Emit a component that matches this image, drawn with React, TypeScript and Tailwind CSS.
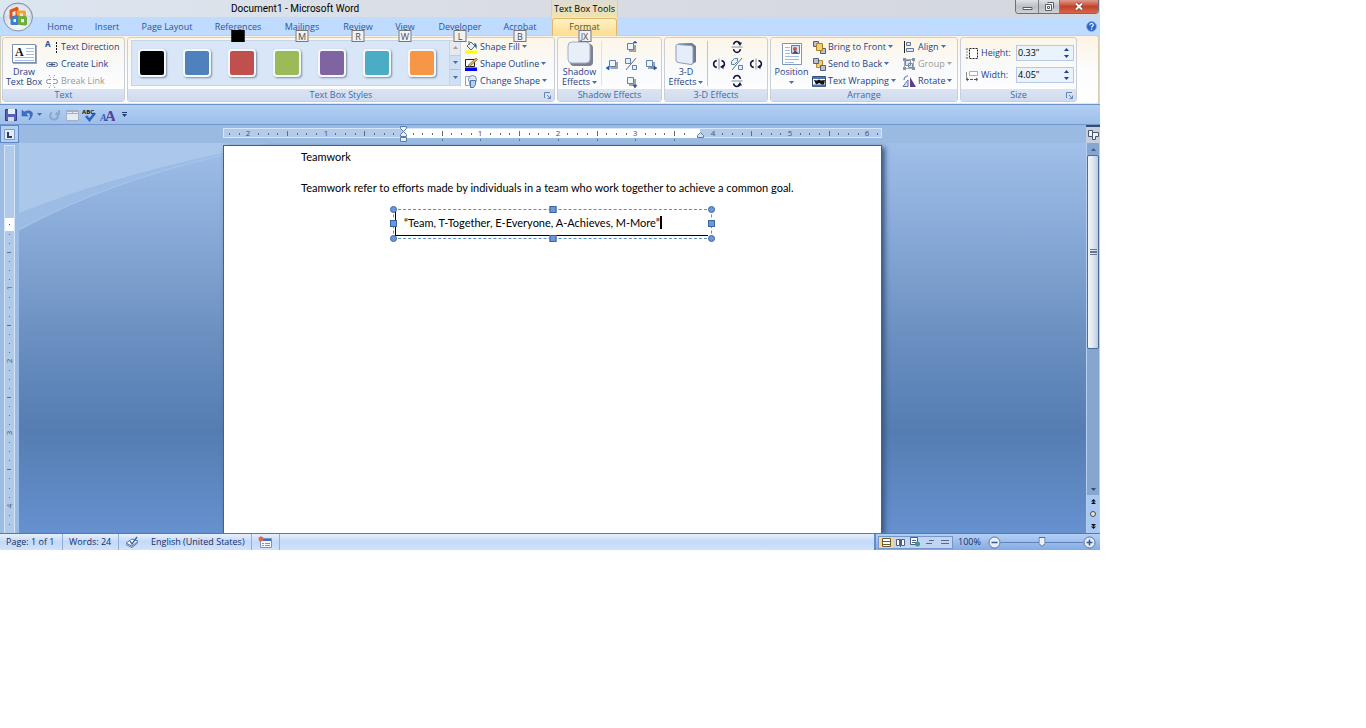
import type { ReactNode } from "react";
import clsx from "clsx";

const tabs = [
  { label: "Home", width: "w-[48px]" },
  { label: "Insert", width: "w-[46px]" },
  { label: "Page Layout", width: "w-[74px]" },
  { label: "References", width: "w-[68px]", selectedTip: true },
  { label: "Mailings", width: "w-[60px]", tip: "M" },
  { label: "Review", width: "w-[52px]", tip: "R" },
  { label: "View", width: "w-[42px]", tip: "W" },
  { label: "Developer", width: "w-[68px]", tip: "L" },
  { label: "Acrobat", width: "w-[52px]", tip: "B" },
];

const swatches = [
  { name: "Black", color: "bg-black" },
  { name: "Blue", color: "bg-[#4f81bd]" },
  { name: "Red", color: "bg-[#c0504d]" },
  { name: "Green", color: "bg-[#9bbb59]" },
  { name: "Purple", color: "bg-[#8064a2]" },
  { name: "Aqua", color: "bg-[#4bacc6]" },
  { name: "Orange", color: "bg-[#f79646]" },
];

function Arrow({ up = false, className = "text-[#4a6fa5]" }: { up?: boolean; className?: string }) {
  return (
    <svg width="5" height="3" viewBox="0 0 5 3" className={clsx("shrink-0", className)} aria-hidden="true">
      <path d={up ? "M0 3h5L2.5 0z" : "M0 0h5L2.5 3z"} fill="currentColor" />
    </svg>
  );
}

function Icon({ w = 14, h = 14, children }: { w?: number; h?: number; children: ReactNode }) {
  return (
    <svg width={w} height={h} viewBox={`0 0 ${w} ${h}`} fill="none" className="shrink-0" aria-hidden="true">
      {children}
    </svg>
  );
}

function KeyTip({ label, selected = false }: { label?: string; selected?: boolean }) {
  return (
    <span
      className={clsx(
        "absolute top-[13px] left-1/2 z-20 flex h-[12px] min-w-[13px] -translate-x-1/2 items-center justify-center border text-[9px] leading-none",
        selected ? "border-black bg-black" : "border-[#767676] bg-[#f1f2f6] text-[#4c4c4c]"
      )}
    >
      {label}
    </span>
  );
}

interface RibbonGroupProps {
  title: string;
  className: string;
  launcher?: boolean;
  children: ReactNode;
}

function RibbonGroup({ title, className, launcher, children }: RibbonGroupProps) {
  return (
    <section
      className={clsx(
        "flex h-[65px] shrink-0 flex-col overflow-hidden rounded-[3px] border border-[#c9cfd8] bg-gradient-to-b from-[#fdf6e8] via-[#f9fafc] to-white",
        className
      )}
    >
      <div className="flex h-[51px] items-stretch">{children}</div>
      <h2 className="relative flex h-[12px] items-center justify-center bg-gradient-to-b from-[#dbe4f3] to-[#cfdbee] text-[#3e6aaa]">
        {title}
        {launcher && (
          <button aria-label={`${title} options`} className="absolute right-[3px] bottom-[2px]">
            <Icon w={7} h={7}>
              <path d="M.5 6V.5H6M3 3l3 3M6.500 3.500v3h-3" stroke="#6486b5" />
            </Icon>
          </button>
        )}
      </h2>
    </section>
  );
}

interface CommandProps {
  icon: ReactNode;
  label: string;
  arrow?: boolean;
  disabled?: boolean;
}

function Command({ icon, label, arrow, disabled }: CommandProps) {
  return (
    <button
      disabled={disabled}
      className={clsx(
        "flex h-[17px] items-center gap-[2px] whitespace-nowrap",
        disabled ? "text-[#9a9a9a]" : "text-[#1f3f86]"
      )}
    >
      {icon}
      {label}
      {arrow && <Arrow className={disabled ? "text-[#a8a8a8]" : "text-[#4a6fa5]"} />}
    </button>
  );
}

interface BigCommandProps {
  icon: ReactNode;
  lines: string[];
  arrow?: "inline" | "below";
  className: string;
}

function BigCommand({ icon, lines, arrow, className }: BigCommandProps) {
  return (
    <button className={clsx("flex shrink-0 flex-col items-center pt-[3px] text-[#1f3f86]", className)}>
      <span className="flex h-[26px] items-center">{icon}</span>
      {lines.map((line, i) => (
        <span key={line} className="flex h-[10px] items-center gap-[2px] whitespace-nowrap">
          {line}
          {arrow === "inline" && i === lines.length - 1 && <Arrow />}
        </span>
      ))}
      {arrow === "below" && (
        <span className="flex h-[10px] items-center">
          <Arrow />
        </span>
      )}
    </button>
  );
}

/* Small square used by the shadow nudge buttons */
function NudgeIcon({ d }: { d: string }) {
  return (
    <Icon>
      <path d="M5 5h7v7H5z" fill="#a3a3a3" />
      <path d="M3.500 3.500h6v6h-6z" fill="#eef5fd" stroke="#5a83b4" />
      <path d={d} fill="#1d55a8" stroke="#1d55a8" strokeWidth="0.5" />
    </Icon>
  );
}

/* Axis line with an arc on each side, the right arc carrying the arrow head */
function TiltIcon({ transform }: { transform?: string }) {
  return (
    <Icon>
      <g transform={transform}>
        <path d="M7 1.500v11" stroke="#7f9186" />
        <path d="M4.800 3.500C.5 4.500.5 9.500 4.800 10.500" stroke="#15154a" strokeWidth="1.500" />
        <path d="M9.500 3.500c3.800 1 3.800 5.500.5 6.500" stroke="#15154a" strokeWidth="1.500" />
        <path d="M11.500 7.500v4.500L8 10z" fill="#15154a" />
      </g>
    </Icon>
  );
}

function OfficeButton() {
  return (
    <button aria-label="Office Button" className="absolute top-[2px] left-[2px] z-20">
      <svg width="32" height="30" viewBox="0 0 32 30" aria-hidden="true">
        <defs>
          <radialGradient id="orb" cx="0.5" cy="0.75" r="0.8">
            <stop offset="0" stopColor="#ffffff" />
            <stop offset="0.5" stopColor="#dfe4ec" />
            <stop offset="1" stopColor="#a9b5c8" />
          </radialGradient>
        </defs>
        <ellipse cx="16" cy="15" rx="14.500" ry="14" fill="url(#orb)" stroke="#8292ab" />
        <path d="M3 14C4 5 10 2 16 2s12 3 13 12c-8-3-18-3-26 0z" fill="#fff" opacity="0.5" />
        <g fill="none" strokeWidth="3" strokeLinejoin="round">
          <path d="M9 9l6-2.500v8L9 16z" stroke="#e2561d" />
          <path d="M16 10h6.500v5.500H17z" stroke="#f4a32a" />
          <path d="M10 16l5.500-1v6.500H10z" stroke="#3c7fd0" />
          <path d="M17.500 15.500h6V22l-6-.5z" stroke="#6eae3a" />
        </g>
      </svg>
    </button>
  );
}

function TitleBar() {
  return (
    <header className="flex h-[17px] bg-gradient-to-r from-[#dce6f0] via-[#d9dce2] to-[#d3d8de] text-[10px] text-black">
      <div className="w-[231px] shrink-0" />
      <h1 className="w-[320px] shrink-0 font-[Roboto,sans-serif] leading-[17px]">Document1 - Microsoft Word</h1>
      <div className="flex w-[67px] shrink-0 items-center justify-center border-x border-[#d8cfa6] bg-gradient-to-b from-[#dedcd4] to-[#efe3ae] text-[9px] whitespace-nowrap">
        Text Box Tools
      </div>
      <div className="mr-px ml-auto flex h-[14px] overflow-hidden rounded-b-[4px] border border-t-0 border-[#6b7078]">
        <button aria-label="Minimize" className="flex w-[23px] items-center justify-center border-r border-[#7b8088] bg-gradient-to-b from-[#dfe2e6] via-[#bcc0c7] to-[#cfd2d7]">
          <Icon w={11} h={9}>
            <path d="M1 5.500h9v2H1z" fill="#fff" stroke="#5a5d63" />
          </Icon>
        </button>
        <button aria-label="Restore" className="flex w-[21px] items-center justify-center border-r border-[#7b8088] bg-gradient-to-b from-[#dfe2e6] via-[#bcc0c7] to-[#cfd2d7]">
          <Icon w={9} h={9}>
            <path d="M2.500.5h6v6M.5 2.500h6v6h-6z" fill="#fff" stroke="#5a5d63" />
            <path d="M2.500 4.500h2v2h-2z" stroke="#5a5d63" />
          </Icon>
        </button>
        <button aria-label="Close" className="flex w-[38px] items-center justify-center bg-gradient-to-b from-[#dd9a8b] via-[#c4412a] to-[#d5664b]">
          <Icon w={10} h={9}>
            <path d="M2 1.500l6 6M8 1.500l-6 6" stroke="#6b3a35" strokeWidth="3.500" />
            <path d="M2 1.500l6 6M8 1.500l-6 6" stroke="#fff" strokeWidth="2" />
          </Icon>
        </button>
      </div>
    </header>
  );
}

function TabStrip() {
  return (
    <nav className="flex h-[18px] bg-[#bfdbff] pl-[36px] text-[#2a55a0]">
      {tabs.map((tab) => (
        <button key={tab.label} className={clsx("relative h-[20px] shrink-0", tab.width)}>
          {tab.label}
          {(tab.tip || tab.selectedTip) && <KeyTip label={tab.tip} selected={tab.selectedTip} />}
        </button>
      ))}
      <div className="relative ml-[5px] flex h-[19px] w-[67px] shrink-0 items-end border-x border-[#e0d9b0] bg-[#f5e8bd]">
        <button className="h-[18px] w-full rounded-t-[3px] border border-b-0 border-[#e0b766] bg-gradient-to-b from-[#fff0c4] to-[#fddc8e] pb-px text-[#54502f]">
          Format
        </button>
        <KeyTip label="JX" />
      </div>
      <button aria-label="Help" className="mr-[3px] ml-auto">
        <Icon w={11} h={11}>
          <circle cx="5.500" cy="5.500" r="5" fill="#2d66c8" stroke="#8fb2e6" />
          <path d="M3.800 4.200c0-2.200 3.500-2.200 3.500-.2 0 1.200-1.700 1.200-1.700 2.500M5.600 7.500v1.300" stroke="#fff" strokeWidth="1.200" />
        </Icon>
      </button>
    </nav>
  );
}

function TextGroup() {
  return (
    <RibbonGroup title="Text" className="w-[123px]">
      <BigCommand
        className="w-[42px]"
        lines={["Draw", "Text Box"]}
        icon={
          <Icon w={25} h={20}>
            <path d="M1 1h24v19H1z" fill="#9aa7b8" />
            <path d="M.5.5h23v18H.5z" fill="#fff" stroke="#7b8fae" />
            <path d="M14 4.500h8M14 7.500h8M14 10.500h8M3 13.500h19M3 16.500h19" stroke="#a9c0e2" />
            <text x="3" y="12" fontSize="12" fontWeight="bold" fontFamily="Liberation Serif, serif" fill="#111">
              A
            </text>
          </Icon>
        }
      />
      <div className="flex flex-col">
        <Command
          label="Text Direction"
          icon={
            <Icon>
              <text x="0" y="7" fontSize="8" fontWeight="bold" fill="#24479b">
                A
              </text>
              <path d="M11.500 2v11" stroke="#111" strokeDasharray="2 1" />
            </Icon>
          }
        />
        <Command
          label="Create Link"
          icon={
            <Icon>
              <rect x="1.500" y="5.500" width="6" height="4" rx="2" fill="#d7e2f0" stroke="#5b6f92" />
              <rect x="6.500" y="5.500" width="6" height="4" rx="2" fill="#d7e2f0" stroke="#5b6f92" />
              <path d="M4 7.500h6" stroke="#40557b" />
            </Icon>
          }
        />
        <Command
          label="Break Link"
          disabled
          icon={
            <Icon>
              <path d="M6 5.500H3.500a2 2 0 000 4H6M8 5.500h2.500a2 2 0 010 4H8" stroke="#8c9099" />
              <path d="M4 1l1.500 2.500M9.500 1L8.500 3.500M4 14l1.500-2.500M10 14l-1.500-2.500" stroke="#8c9099" strokeDasharray="1 1" />
            </Icon>
          }
        />
      </div>
    </RibbonGroup>
  );
}

function StylesGroup() {
  return (
    <RibbonGroup title="Text Box Styles" className="w-[428px]" launcher>
      <div className="mt-[2px] ml-[3px] flex h-[46px] shrink-0 border border-[#c5d6ec] bg-[#d8e6f7]">
        <div className="flex w-[317px] items-center gap-[17px] pl-[6px]">
          {swatches.map((swatch) => (
            <button
              key={swatch.name}
              aria-label={swatch.name}
              className={clsx("size-[28px] shrink-0 rounded-[4px] border-2 border-[#f4f8fd] shadow-[1px_1px_2px_#7d8ca3]", swatch.color)}
            />
          ))}
        </div>
        <div className="grid w-[11px] grid-rows-3 border-l border-[#c5d6ec]">
          <button aria-label="Previous row" className="flex items-center justify-center border-b border-[#b9cde8] bg-[#e9e9eb]">
            <Arrow up className="text-[#a0a0a0]" />
          </button>
          <button aria-label="Next row" className="flex items-center justify-center border-b border-[#a9c2e4] bg-[#cfe0f5]">
            <Arrow />
          </button>
          <button aria-label="More styles" className="flex items-center justify-center bg-[#cfe0f5]">
            <Arrow />
          </button>
        </div>
      </div>
      <div className="ml-[3px] flex flex-col">
        <Command
          label="Shape Fill"
          arrow
          icon={
            <Icon>
              <path d="M3 6l4-4 4 4-4 4z" fill="#e9eef5" stroke="#55657c" />
              <path d="M5 1v4" stroke="#55657c" />
              <path d="M10 3c3 0 3 3 2.500 6C11 7 10.500 5 10 3z" fill="#2e66b5" />
              <path d="M1 10.500h12v3H1z" fill="#ffff00" />
            </Icon>
          }
        />
        <Command
          label="Shape Outline"
          arrow
          icon={
            <Icon>
              <path d="M1.500 2.500h9v7h-9z" stroke="#222" />
              <path d="M4 8.500l8-7.500 1.500 1.500-8 7z" fill="#e6b355" stroke="#7a5520" strokeWidth="0.700" />
              <path d="M1 10.500h12v3.500H1z" fill="#0000f0" />
            </Icon>
          }
        />
        <Command
          label="Change Shape"
          arrow
          icon={
            <Icon>
              <path d="M1.500 2.500h4v9h-4z" fill="#fff" stroke="#8ea4c4" />
              <circle cx="8.500" cy="5.500" r="4" fill="#dfeaf7" stroke="#6d8db8" />
              <path d="M6.500 6.500h5v4l-2 3h-3z" fill="#b9d0ee" stroke="#4a74ad" />
            </Icon>
          }
        />
      </div>
    </RibbonGroup>
  );
}

function ShadowGroup() {
  return (
    <RibbonGroup title="Shadow Effects" className="w-[105px]">
      <BigCommand
        className="w-[43px]"
        lines={["Shadow", "Effects"]}
        arrow="inline"
        icon={
          <Icon w={26} h={26}>
            <rect x="3" y="3" width="23" height="22" rx="4" fill="#7c828e" />
            <rect x="1" y="1" width="22" height="21" rx="4" fill="#e8eff9" stroke="#9fb0ca" />
          </Icon>
        }
      />
      <div className="my-[3px] w-px bg-[#dde3ec]" />
      <div className="grid flex-1 grid-cols-3 grid-rows-3 place-items-center px-[2px]">
        <span />
        <button aria-label="Nudge shadow up"><NudgeIcon d="M9 3h4L11 1z" /></button>
        <span />
        <button aria-label="Nudge shadow left"><NudgeIcon d="M3 9v4L0 11zM3 11h2" /></button>
        <button aria-label="Shadow on/off">
          <Icon>
            <path d="M1.500 1.500h5v5h-5zM8.500 8.500h4v4h-4z" fill="#e7f0fa" stroke="#5a83b4" />
            <path d="M2 13L12 1" stroke="#5a6d8a" />
          </Icon>
        </button>
        <button aria-label="Nudge shadow right"><NudgeIcon d="M11 9v4l3-2zM8 11h3" /></button>
        <span />
        <button aria-label="Nudge shadow down"><NudgeIcon d="M9 11h4l-2 3z" /></button>
        <span />
      </div>
    </RibbonGroup>
  );
}

function ThreeDGroup() {
  return (
    <RibbonGroup title="3-D Effects" className="w-[104px]">
      <BigCommand
        className="w-[42px]"
        lines={["3-D", "Effects"]}
        arrow="inline"
        icon={
          <Icon w={22} h={24}>
            <path d="M3 1.500l14-.5 4 3v16l-4 2z" fill="#707b8c" />
            <path d="M2.500 2.500Q1 2 1 4v14q0 2 2 2.500l13 2q2 0 2-2V6q0-2-2-2.500z" fill="#e5edf8" stroke="#8c9db8" />
          </Icon>
        }
      />
      <div className="my-[3px] w-px bg-[#b5c7de]" />
      <div className="grid flex-1 grid-cols-3 grid-rows-3 place-items-center px-[2px]">
        <span />
        <button aria-label="Tilt down"><TiltIcon transform="matrix(0 -1 1 0 0 14)" /></button>
        <span />
        <button aria-label="Tilt left"><TiltIcon /></button>
        <button aria-label="3-D on/off">
          <Icon>
            <path d="M1.500 4.500l3-3h3v3l-3 3h-3zM8.500 8.500h4v4h-4z" fill="#e7f0fa" stroke="#5a83b4" />
            <path d="M2 13L12 1" stroke="#5a6d8a" />
          </Icon>
        </button>
        <button aria-label="Tilt right"><TiltIcon /></button>
        <span />
        <button aria-label="Tilt up"><TiltIcon transform="matrix(0 1 1 0 0 0)" /></button>
        <span />
      </div>
    </RibbonGroup>
  );
}

function ArrangeGroup() {
  return (
    <RibbonGroup title="Arrange" className="w-[188px]">
      <BigCommand
        className="w-[41px]"
        lines={["Position"]}
        arrow="below"
        icon={
          <Icon w={20} h={22}>
            <path d="M.5.5h19v21H.5z" fill="#fff" stroke="#8196b6" />
            <path d="M3 4.500h5M3 7.500h5M3 10.500h5M3 13.500h14M3 16.500h14M3 19.500h9" stroke="#a4bbdd" />
            <path d="M9.500 2.500h8v8h-8z" fill="#cfe0f5" stroke="#5f7aa5" />
            <circle cx="13" cy="6" r="2" fill="#c7573c" />
            <path d="M10 10.500l3-3 4 3z" fill="#37507c" />
          </Icon>
        }
      />
      <div className="flex w-[90px] shrink-0 flex-col">
        <Command
          label="Bring to Front"
          arrow
          icon={
            <Icon>
              <path d="M1.500 1.500h5v5h-5zM8.500 8.500h5v5h-5z" fill="#b9c2cf" stroke="#56606f" />
              <path d="M4.500 3.500h6v7h-6z" fill="#f7cf6a" stroke="#a8802b" />
            </Icon>
          }
        />
        <Command
          label="Send to Back"
          arrow
          icon={
            <Icon>
              <path d="M4.500 3.500h6v7h-6z" fill="#f7cf6a" stroke="#b08a3a" />
              <path d="M1.500 1.500h5v5h-5zM8.500 8.500h5v5h-5z" fill="#b9c2cf" stroke="#56606f" />
            </Icon>
          }
        />
        <Command
          label="Text Wrapping"
          arrow
          icon={
            <Icon>
              <path d="M.5 2.500h13v10H.5z" fill="#fff" stroke="#36507e" />
              <path d="M1 4h12M1 11.500h12" stroke="#5176b0" strokeWidth="2" />
              <path d="M2 6l3 .5L7 5.500l2 1L13 6l-1 4.500H9.500L7.500 9 4 10.500z" fill="#111" />
            </Icon>
          }
        />
      </div>
      <div className="flex flex-col">
        <Command
          label="Align"
          arrow
          icon={
            <Icon>
              <path d="M2.500 1v12" stroke="#222" />
              <path d="M4.500 2.500h4v3h-4zM4.500 8.500h7v3h-7z" fill="#dbe7f6" stroke="#60789c" />
            </Icon>
          }
        />
        <Command
          label="Group"
          arrow
          disabled
          icon={
            <Icon>
              <path d="M2.500 2.500h9v9h-9z" stroke="#a0abb9" />
              <path d="M3.500 3.500h5v5h-5zM6.500 6.500h4v4h-4z" fill="#e3e9f1" stroke="#7789a3" />
              <path d="M1 1h3v3H1zM10 1h3v3h-3zM1 10h3v3H1zM10 10h3v3h-3z" fill="#8393aa" />
            </Icon>
          }
        />
        <Command
          label="Rotate"
          arrow
          icon={
            <Icon>
              <path d="M1 12.500L6 6v6.500z" fill="#dbe7f6" stroke="#60789c" />
              <path d="M8 3v10h6z" fill="#5b3f96" />
              <path d="M2 6c0-3 2-4 4-4" stroke="#3a6cae" />
            </Icon>
          }
        />
      </div>
    </RibbonGroup>
  );
}

interface SizeFieldProps {
  id: string;
  label: string;
  value: string;
  icon: ReactNode;
}

function SizeField({ id, label, value, icon }: SizeFieldProps) {
  return (
    <div className="flex h-[22px] items-center text-[#1f3f86]">
      {icon}
      <label htmlFor={id} className="w-[37px] shrink-0 pl-[2px]">
        {label}
      </label>
      <div className="flex h-[16px] w-[58px] border border-[#b4cae8] bg-[#eaf2fb]">
        <input id={id} defaultValue={value} className="w-[43px] bg-transparent pl-px text-black outline-none" />
        <div className="flex w-[13px] flex-col items-center justify-center gap-[4px]">
          <button aria-label={`Increase ${id}`}>
            <Arrow up className="text-[#23427c]" />
          </button>
          <button aria-label={`Decrease ${id}`}>
            <Arrow className="text-[#23427c]" />
          </button>
        </div>
      </div>
    </div>
  );
}

function SizeGroup() {
  return (
    <RibbonGroup title="Size" className="w-[117px]" launcher>
      <div className="flex flex-col pt-[4px] pl-[4px]">
        <SizeField
          id="height"
          label="Height:"
          value={'0.33"'}
          icon={
            <Icon>
              <path d="M4.500 2.500h8v10h-8z" fill="#fff" stroke="#222" strokeDasharray="2 1" />
              <path d="M2 2v11M1 4l1-2 1 2M1 11l1 2 1-2" stroke="#7d8ea8" strokeDasharray="2 1" />
            </Icon>
          }
        />
        <SizeField
          id="width"
          label="Width:"
          value={'4.05"'}
          icon={
            <Icon>
              <path d="M1.500 9.500v-6M12.500 3.500v4" stroke="#222" strokeDasharray="1 1" />
              <path d="M4.500 3.500h8v4h-8z" fill="#fff" stroke="#9db0cb" />
              <path d="M1 11.500h12M3 10l-2 1.500L3 13M11 10l2 1.500-2 1.500" stroke="#555" strokeDasharray="3 1" />
            </Icon>
          }
        />
      </div>
    </RibbonGroup>
  );
}

function Ribbon() {
  return (
    <div className="mr-px flex h-[69px] items-center gap-[2px] rounded-[3px] border border-[#d6cdb8] border-b-[#dfe8f5] bg-gradient-to-b from-[#fcf3e2] via-[#fcfcfd] to-white pl-px">
      <TextGroup />
      <StylesGroup />
      <ShadowGroup />
      <ThreeDGroup />
      <ArrangeGroup />
      <SizeGroup />
    </div>
  );
}

function QuickAccess() {
  return (
    <div className="flex h-[21px] items-center border-t border-b border-t-[#6d93c8] border-b-[#7199cf] bg-gradient-to-b from-[#b3cff3] to-[#9dbfea] pl-[4px]">
      <button aria-label="Save">
        <Icon>
          <path d="M1.500 1.500h11v11h-11z" fill="#5561b5" stroke="#343c8c" />
          <path d="M4 1h7v5H4z" fill="#e9eefb" />
          <path d="M4 9h6v4H4z" fill="#d5d9ea" />
        </Icon>
      </button>
      <button aria-label="Undo" className="ml-[3px]">
        <Icon>
          <path d="M1 2v6h6L4.800 5.800C8 3.500 11 5.500 8 12c6-5 4-12-5-8z" fill="#3f6fc9" stroke="#2c55a5" strokeWidth="0.500" />
        </Icon>
      </button>
      <button aria-label="Undo history" className="ml-[2px]">
        <Arrow />
      </button>
      <button aria-label="Repeat" disabled className="ml-[5px]">
        <Icon>
          <path d="M9 4.500c3 2 2.500 7-2 7s-5-5-2-7M12 2v4H8.500" stroke="#8fa6c8" strokeWidth="2" />
        </Icon>
      </button>
      <button aria-label="Table" className="ml-[4px]">
        <Icon>
          <path d="M1.500 2.500h12v10h-12z" fill="#e4ebf4" stroke="#a2b0c4" />
          <path d="M1 5.500h12M7.500 3v3M1 3.500h12" stroke="#a2b0c4" />
        </Icon>
      </button>
      <button aria-label="Spelling" className="ml-[3px]">
        <Icon>
          <path d="M4 8l3.500 4L13 5" stroke="#2e60c0" strokeWidth="2.500" />
          <text x="0" y="6" fontSize="6" fontWeight="bold" fill="#111">
            ABC
          </text>
        </Icon>
      </button>
      <button aria-label="Styles" className="ml-[4px]">
        <Icon w={15}>
          <text x="0" y="13" fontSize="10" fontWeight="bold" fontStyle="italic" fontFamily="Liberation Serif, serif" fill="#3360b5">
            A
          </text>
          <text x="5" y="13" fontSize="15" fontWeight="bold" fontFamily="Liberation Serif, serif" fill="#5a3f9c">
            A
          </text>
        </Icon>
      </button>
      <button aria-label="Customize Quick Access Toolbar" className="ml-[7px] flex flex-col items-center gap-px">
        <span className="h-px w-[5px] bg-[#1e3f78]" />
        <Arrow className="text-[#1e3f78]" />
      </button>
    </div>
  );
}

const INCH = 77.4;
const ZERO = 180;

function HorizontalRuler() {
  const eighths = Array.from({ length: 70 }, (_, i) => i - 18).filter((n) => ZERO + (n * INCH) / 8 < 657);
  return (
    <svg width="659" height="18" viewBox="0 0 659 18" className="block shrink-0" aria-hidden="true">
      <rect x="0.500" y="3.500" width="658" height="9" fill="#b3cbeb" stroke="#d8e6f8" />
      <rect x={ZERO} y="4" width="297" height="9" fill="#fff" />
      {eighths.map((n) => {
        const x = Math.round(ZERO + (n * INCH) / 8);
        if (n === 0 || n === 31 || n === 30) return null;
        if (n % 8 === 0) {
          return (
            <text key={n} x={x} y="11" fontSize="8" textAnchor="middle" fill="#45536b">
              {Math.abs(n / 8)}
            </text>
          );
        }
        const half = n % 4 === 0;
        return <rect key={n} x={x} y={half ? 6 : 8} width="1" height={half ? 5 : 2} fill="#5d6d88" />;
      })}
      {[1, 2, 3, 4, 5, 6, 7].map((n) => (
        <rect key={n} x={Math.round(ZERO + (n * INCH) / 2)} y="14" width="1" height="2" fill="#5d7296" />
      ))}
      <path d="M177.500 1.500h6v2l-3 3 3 3v2h-6v-2l3-3-3-3z" fill="#e9f0f9" stroke="#5b7ca9" />
      <path d="M177.500 12.500h6v4h-6z" fill="#e9f0f9" stroke="#5b7ca9" />
      <path d="M474.500 12.500v-2l3-3 3 3v2z" fill="#d5e3f5" stroke="#5b7ca9" />
    </svg>
  );
}

function VerticalRuler() {
  const ticks = Array.from({ length: 36 }, (_, i) => i + 1);
  return (
    <div className="w-[19px] shrink-0 bg-[#9dbce4] pl-[4px]">
      <svg width="11" height="390" viewBox="0 0 11 390" aria-hidden="true">
        <rect x="0.500" y="2.500" width="10" height="388" fill="#b1caea" stroke="#d5e4f7" />
        <rect x="1" y="75" width="9" height="13" fill="#fff" />
        <rect x="5" y="81" width="1" height="1" fill="#40506c" />
        {ticks.map((n) => {
          const y = Math.round(73 + n * 9.05);
          if (y < 88 || y > 386) return null;
          if (n % 8 === 0) {
            return (
              <text key={n} transform={`translate(8 ${y}) rotate(-90)`} fontSize="8" textAnchor="middle" fill="#45536b">
                {n / 8}
              </text>
            );
          }
          const half = n % 4 === 0;
          return <rect key={n} x={half ? 3 : 5} y={y} width={half ? 4 : 1} height="1" fill="#5d6d88" />;
        })}
      </svg>
    </div>
  );
}

const squareHandle = "absolute size-[7px] border border-[#3c64a0] bg-[#6b98dc]";
const roundHandle = "absolute size-[7px] rounded-full border border-[#3c64a0] bg-[#6b98dc]";

function TextBox() {
  return (
    <div className="relative ml-[92px] h-[30px] w-[319px] border border-dashed border-[#5d8fc4]">
      <div className="mr-[3px] ml-px flex h-[26px] items-center border-b border-l border-black pl-[8px]">
        <p className="whitespace-nowrap">“Team, T-Together, E-Everyone, A-Achieves, M-More”</p>
        <span className="h-[13px] w-[2px] bg-black" />
      </div>
      <span className={clsx(roundHandle, "-top-[4px] -left-[4px]")} />
      <span className={clsx(squareHandle, "-top-[4px] left-1/2 -translate-x-1/2")} />
      <span className={clsx(roundHandle, "-top-[4px] -right-[4px]")} />
      <span className={clsx(squareHandle, "top-[10px] -left-[4px]")} />
      <span className={clsx(squareHandle, "top-[10px] -right-[4px]")} />
      <span className={clsx(roundHandle, "-bottom-[4px] -left-[4px]")} />
      <span className={clsx(squareHandle, "-bottom-[4px] left-1/2 -translate-x-1/2")} />
      <span className={clsx(roundHandle, "-right-[4px] -bottom-[4px]")} />
    </div>
  );
}

function Workspace() {
  return (
    <main className="relative flex flex-1 justify-center overflow-hidden bg-[linear-gradient(to_bottom,#a0bfe9_0%,#86a8d6_25%,#6a8fc0_50%,#557db2_74%,#6691cf_100%)] pt-[2px]">
      <svg width="260" height="92" viewBox="0 0 260 92" className="absolute top-0 left-0" aria-hidden="true">
        <path d="M0 0h250L204 12Q90 38 0 87z" fill="#9dbce5" />
        <path d="M0 0h250L204 10Q90 34 0 70z" fill="#abc8eb" />
        <path d="M204 12Q90 38 0 87" fill="none" stroke="#a9c6ec" />
      </svg>
      <article className="relative min-h-[388px] w-[659px] border border-b-0 border-[#4d6078] bg-white px-[77px] font-[Lato,sans-serif] text-[11px] leading-[15px] text-black shadow-[3px_2px_5px_#3c5a85]">
        <p className="mt-[3px]">Teamwork</p>
        <p className="mt-[16px] mb-[14px] whitespace-nowrap">
          Teamwork refer to efforts made by individuals in a team who work together to achieve a common goal.
        </p>
        <TextBox />
      </article>
    </main>
  );
}

function ScrollBar() {
  return (
    <div className="flex w-[14px] shrink-0 flex-col items-center border-x border-[#b6cff0] bg-[#86a5cf]">
      <button aria-label="Scroll up" className="flex h-[12px] items-center">
        <Arrow up className="text-[#3f5d8c]" />
      </button>
      <button
        aria-label="Scroll position"
        className="flex h-[194px] w-full flex-col items-center justify-center gap-px rounded-[2px] border border-[#4d6b9b] bg-gradient-to-r from-[#f3f6fb] via-[#dfe6f0] to-[#bccbdf]"
      >
        <span className="h-px w-[7px] bg-[#66758c]" />
        <span className="h-[2px] w-[7px] bg-[#66758c]" />
        <span className="h-px w-[7px] bg-[#66758c]" />
      </button>
      <button aria-label="Scroll down" className="mt-auto flex h-[12px] items-center">
        <Arrow className="text-[#2d4a78]" />
      </button>
      <div className="flex h-[38px] w-full flex-col items-center justify-around bg-[#a9c8f2]">
        <button aria-label="Previous page">
          <Icon w={5} h={5}>
            <path d="M0 2.500h5L2.500 0zM0 5h5L2.500 2.500z" fill="#111" />
          </Icon>
        </button>
        <button aria-label="Select browse object">
          <Icon w={6} h={6}>
            <circle cx="3" cy="3" r="2.500" fill="#e8e3d2" stroke="#4c4c4c" />
          </Icon>
        </button>
        <button aria-label="Next page">
          <Icon w={5} h={5}>
            <path d="M0 0h5L2.500 2.500zM0 2.500h5L2.500 5z" fill="#111" />
          </Icon>
        </button>
      </div>
    </div>
  );
}

function StatusBar() {
  const item = "flex h-full items-center border-r border-[#8fb0df]";
  return (
    <footer className="flex h-[17px] border-t border-[#5479ad] bg-gradient-to-b from-[#e6f0fd] via-[#c3d9f7] to-[#d2e3fb] text-[#1a2f66]">
      <button className={clsx(item, "w-[63px] pl-[6px]")}>Page: 1 of 1</button>
      <button className={clsx(item, "w-[56px] pl-[6px]")}>Words: 24</button>
      <button aria-label="Proofing" className="flex w-[32px] items-center pl-[6px]">
        <Icon>
          <path d="M1 8l6-4 6 2-6 5z" fill="#fff" stroke="#5e769e" />
          <path d="M1 9.500l6 3 6-5" stroke="#5e769e" />
          <path d="M5 6l2 3 5-7" stroke="#3762ad" strokeWidth="1.300" />
        </Icon>
      </button>
      <button className={clsx(item, "w-[101px] whitespace-nowrap")}>English (United States)</button>
      <button aria-label="Macros" className={clsx(item, "w-[28px] pl-[6px]")}>
        <Icon>
          <path d="M2.500 3.500h11v9h-11z" fill="#f7f9fd" stroke="#7e92b3" />
          <path d="M3 4h10v2H3z" fill="#3f6fc9" />
          <path d="M4 8.500h2M7 8.500h5M4 10.500h2M7 10.500h5" stroke="#8293b0" />
          <circle cx="3" cy="4" r="2.500" fill="#dd6a4b" />
        </Icon>
      </button>
      <div className="ml-auto flex w-[226px] items-center border-l-2 border-[#5f8ccb] bg-gradient-to-b from-[#b5d0f5] to-[#84abe3] pl-[2px]">
        <div className="flex h-[13px] border border-[#7397cb] bg-[#bfd5f3]">
          <button aria-label="Print Layout" className="flex w-[14px] items-center justify-center bg-[#fbd78b]">
            <Icon w={9} h={9}>
              <path d="M.5.5h8v8h-8zM1 3.500h7M1 6.500h7" fill="#fff" stroke="#6a5a35" />
            </Icon>
          </button>
          <button aria-label="Full Screen Reading" className="flex w-[15px] items-center justify-center">
            <Icon w={9} h={9}>
              <path d="M.5 1.500h3v6h-3zM5.500 1.500h3v6h-3zM4.500 1v8" fill="#fff" stroke="#4f5f7b" />
            </Icon>
          </button>
          <button aria-label="Web Layout" className="flex w-[14px] items-center justify-center">
            <Icon w={10} h={10}>
              <path d="M.5.5h7v7h-7zM2 3.500h4M2 5.500h4" fill="#fff" stroke="#4f5f7b" />
              <circle cx="7.500" cy="7" r="2.500" fill="#3d9a8b" />
            </Icon>
          </button>
          <button aria-label="Outline" className="flex w-[15px] items-center justify-center">
            <Icon w={8} h={8}>
              <path d="M3 2.500h5M0 5.500h6" stroke="#5a6a86" />
            </Icon>
          </button>
          <button aria-label="Draft" className="flex w-[15px] items-center justify-center">
            <Icon w={8} h={8}>
              <path d="M0 2.500h8M0 5.500h8" stroke="#5a6a86" />
            </Icon>
          </button>
        </div>
        <button className="ml-[5px] w-[30px] text-left">100%</button>
        <button aria-label="Zoom out">
          <Icon w={13} h={13}>
            <circle cx="6.500" cy="6.500" r="5.500" fill="#e6f0fc" stroke="#54709c" />
            <path d="M3.500 6.500h6" stroke="#3b5580" strokeWidth="1.500" />
          </Icon>
        </button>
        <div className="relative flex h-full flex-1 items-center">
          <span className="h-px w-full bg-[#5f83b8]" />
          <svg width="7" height="10" viewBox="0 0 7 10" className="absolute left-1/2 -translate-x-1/2" aria-hidden="true">
            <path d="M.5.5h6v6l-3 3-3-3z" fill="#e9f1fc" stroke="#4c6da0" />
          </svg>
        </div>
        <button aria-label="Zoom in" className="mr-[4px]">
          <Icon w={13} h={13}>
            <circle cx="6.500" cy="6.500" r="5.500" fill="#e6f0fc" stroke="#54709c" />
            <path d="M3.500 6.500h6M6.500 3.500v6" stroke="#3b5580" strokeWidth="1.500" />
          </Icon>
        </button>
      </div>
    </footer>
  );
}

export default function App() {
  return (
    <div className="min-h-screen bg-white">
      <div className="relative w-full max-w-[1100px] overflow-hidden bg-[#bfdbff] font-['Open_Sans',sans-serif] text-[9px] leading-[12px]">
        <OfficeButton />
        <TitleBar />
        <TabStrip />
        <Ribbon />
        <QuickAccess />

        <div className="flex h-[18px] bg-[#9bbae2]">
          <button aria-label="Tab selector" className="flex w-[19px] items-center justify-center border border-[#5e86c4] bg-[#b5cff2]">
            <Icon w={11} h={11}>
              <path d="M.5.5h10v10H.5z" fill="#e2edfb" stroke="#7d9ccb" />
              <path d="M4 3v5h4" stroke="#2c3e60" strokeWidth="2" />
            </Icon>
          </button>
          <div className="flex flex-1 justify-center overflow-hidden">
            <HorizontalRuler />
          </div>
          <button aria-label="View Ruler" className="flex w-[14px] flex-col items-center border-t-2 border-[#3a4c6b] bg-[#c3cfe0] pt-[2px]">
            <Icon w={11} h={11}>
              <path d="M.5 1.500h4v6h-4zM4.500 3.500h6v4h-3v3h-3z" fill="#eef2f8" stroke="#4a566c" />
            </Icon>
          </button>
        </div>

        <div className="flex">
          <VerticalRuler />
          <Workspace />
          <ScrollBar />
        </div>
        <StatusBar />
      </div>
    </div>
  );
}
